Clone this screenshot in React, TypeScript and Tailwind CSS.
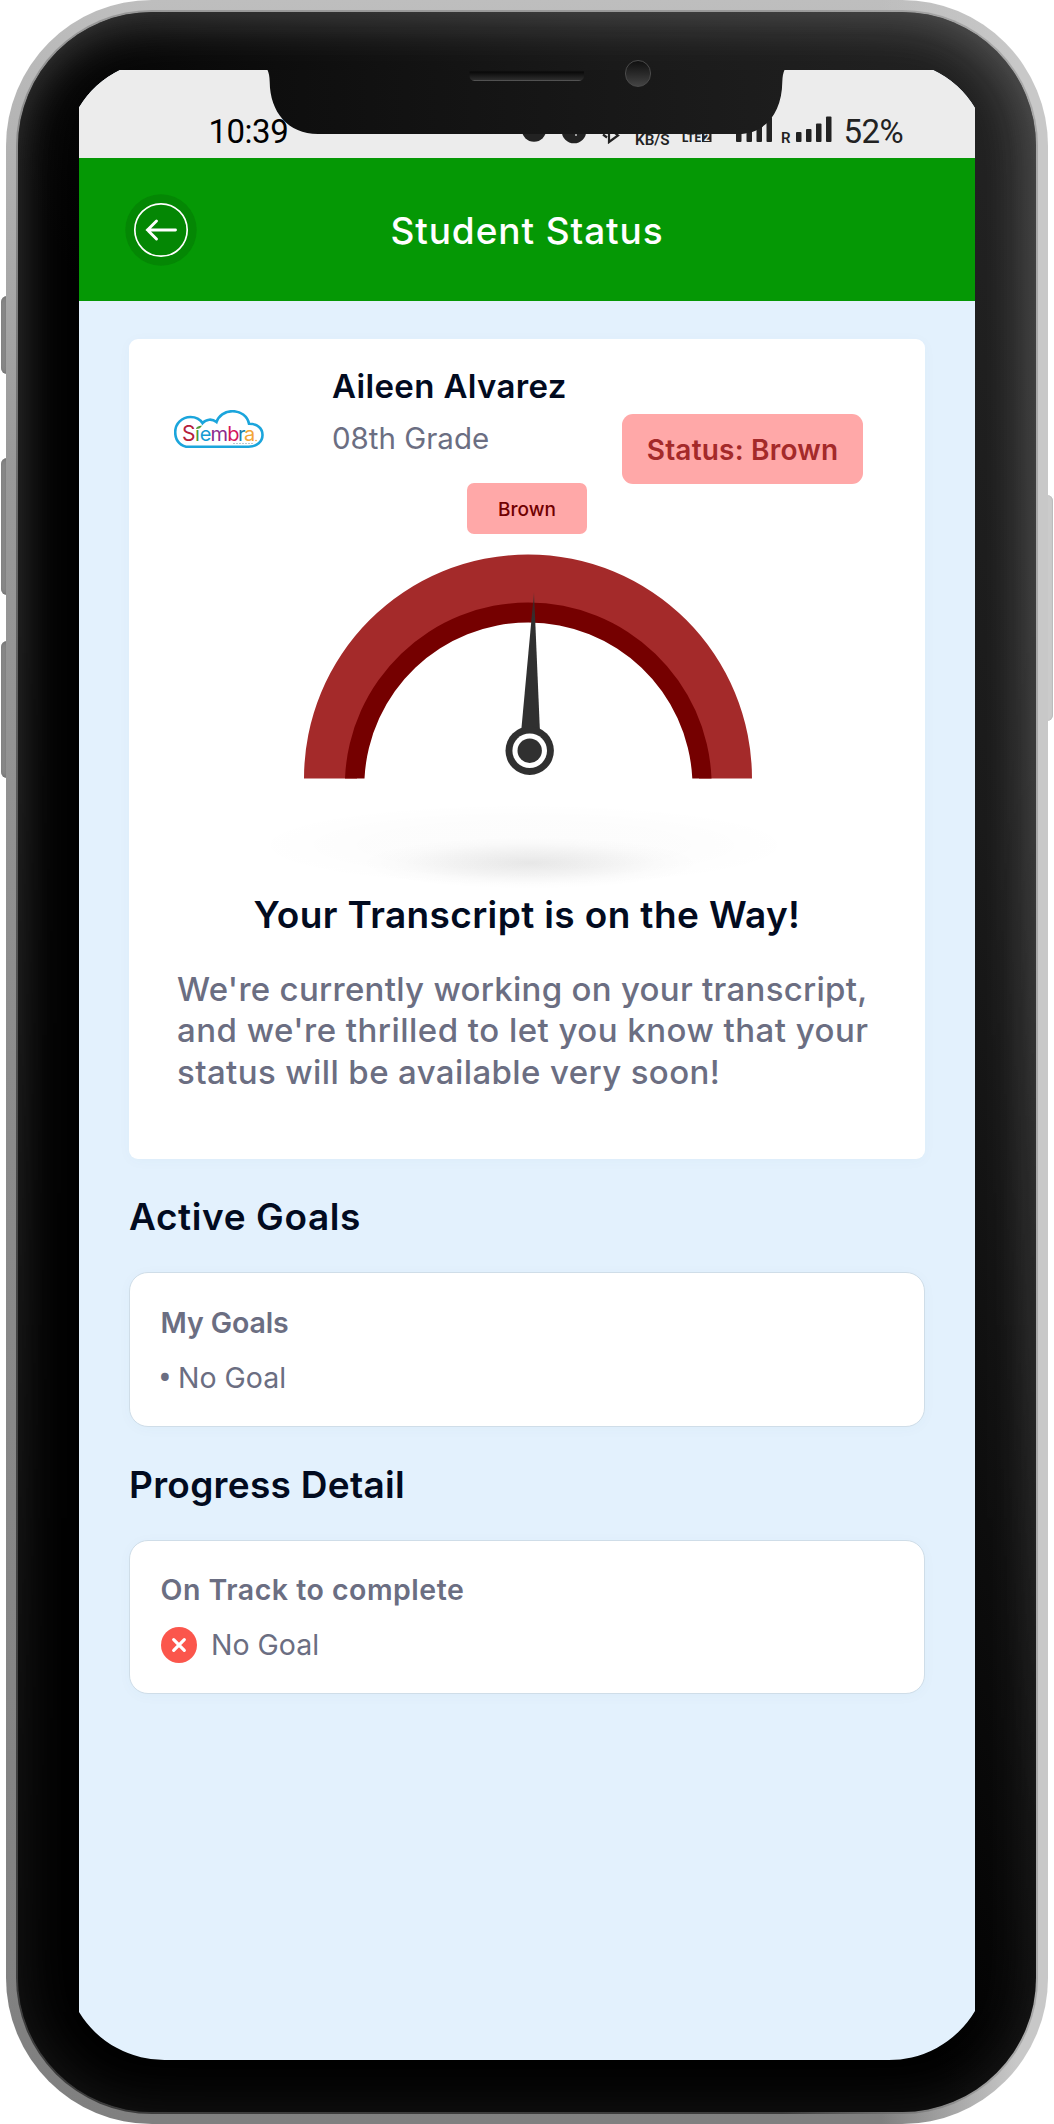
import type { ReactNode } from "react";

const screenClip =
  "path('M0 37.5 A98 98 0 0 1 41 0 H854 A98 98 0 0 1 896 38 V1941 A100 100 0 0 1 806 1990 H88 A100 100 0 0 1 0 1942 Z')";

function SideButton({ className }: { className: string }) {
  return (
    <div
      className={`absolute left-[1px] w-[9px] rounded-l-[6px] bg-linear-to-r from-[#979797] to-[#707070] shadow-[inset_0_0_4px_#666] ${className}`}
    />
  );
}

function StatusIcons() {
  return (
    <svg className="absolute left-[441px] top-[40px]" width="320" height="40" viewBox="520 110 320 40" fill="#222">
      <circle cx="534" cy="129.500" r="12.200" />
      <circle cx="574" cy="131" r="12.300" />
      <path d="M576 125v11" stroke="#ececec" strokeWidth="1.200" />
      <path d="M603 134.500l4 3M609 122v20l9-6.500-13-10" fill="none" stroke="#222" strokeWidth="2.200" />
      <text x="635" y="144.500" fontFamily="Roboto, sans-serif" fontSize="15.500" fontWeight="600" textLength="34.500" lengthAdjust="spacingAndGlyphs">KB/S</text>
      <text x="682" y="141.700" fontFamily="Roboto, sans-serif" fontSize="13" fontWeight="800" textLength="19" lengthAdjust="spacingAndGlyphs">LTE</text>
      <rect x="702" y="131" width="9.500" height="11" />
      <text x="703.800" y="140.800" fontFamily="Roboto, sans-serif" fontSize="10.500" fontWeight="700" fill="#ececec">2</text>
      <rect x="736" y="132" width="5.500" height="10" rx="1" />
      <rect x="746.500" y="129" width="5.500" height="13" rx="1" />
      <rect x="756.500" y="124" width="5.500" height="18" rx="1" />
      <rect x="766.500" y="117" width="5.500" height="25" rx="1" />
      <text x="781" y="142.700" fontFamily="Roboto, sans-serif" fontSize="15" fontWeight="600">R</text>
      <rect x="796" y="132" width="5.500" height="10" rx="1" />
      <rect x="806" y="129" width="5.500" height="13" rx="1" />
      <rect x="816" y="123.500" width="5.500" height="18.500" rx="1" />
      <rect x="826" y="116.500" width="5.500" height="25.500" rx="1" />
    </svg>
  );
}

function Notch() {
  return (
    <svg className="absolute left-[181px] top-0" width="532" height="66" viewBox="260 70 532 66" fill="none">
      <defs>
        <linearGradient id="notch" x1="0" x2="1">
          <stop offset="0" stopColor="#0e0e0e" />
          <stop offset="1" stopColor="#1d1d1d" />
        </linearGradient>
        <linearGradient id="speaker" x1="0" x2="0" y1="0" y2="1">
          <stop offset="0" stopColor="#070707" />
          <stop offset="0.850" stopColor="#2b2b2b" />
          <stop offset="1" stopColor="#666" />
        </linearGradient>
      </defs>
      <path
        d="M267.500 70Q269.500 74 269.700 82C270 112 288 134 318 134H738C766 134 782 112 782.300 82Q782.500 74 784.500 70Z"
        fill="url(#notch)"
      />
      <path d="M469.500 71.500H584V76A5 5 0 0 1 579 81H474.500A5 5 0 0 1 469.500 76Z" fill="url(#speaker)" />
    </svg>
  );
}

function Logo() {
  return (
    <svg className="block" width="90" height="39" viewBox="0 0 90 39" fill="none">
      <path
        d="M15 36.800H74.500C83 36.800 88.500 31.500 88.500 25C88.500 18 83 13.800 75 13.800C73.500 6 66.500 1.200 58.500 1.200C50.500 1.200 44.500 6 42.500 12C38 8.500 32 9 28.500 13.200C26 9 21.500 7 16.500 7C8 7 1.200 13.500 1.200 22C1.200 31 7 36.800 15 36.800Z"
        stroke="#1ba5dc"
        strokeWidth="2.600"
      />
      <text y="31" fontFamily="Inter, sans-serif" fontSize="20">
        <tspan x="8" fontSize="21" fill="#b5203a">S</tspan>
        <tspan x="21" fill="#4f9a35">ı</tspan>
        <tspan x="25.800" fill="#159bd3">e</tspan>
        <tspan x="36.500" fill="#8b2c8e">m</tspan>
        <tspan x="53.200" fill="#d4145a">b</tspan>
        <tspan x="64" fill="#1d7fae">r</tspan>
        <tspan x="70" fill="#f3a536">a</tspan>
      </text>
      <path d="M22 19Q22 16 28 15.500Q26.500 19 22 19Z" fill="#4f9a35" />
      <path d="M59 33.500H79" stroke="#b9c9d2" strokeWidth="1" strokeDasharray="2 1" />
      <circle cx="82" cy="30.500" r="0.800" fill="#f3a536" />
    </svg>
  );
}

function Gauge() {
  return (
    <svg className="block" width="796" height="358" viewBox="129 534 796 358" fill="none">
      <defs>
        <radialGradient id="shade">
          <stop offset="0" stopColor="#000" stopOpacity="0.085" />
          <stop offset="0.450" stopColor="#000" stopOpacity="0.042" />
          <stop offset="0.750" stopColor="#000" stopOpacity="0.012" />
          <stop offset="1" stopColor="#000" stopOpacity="0" />
        </radialGradient>
        <radialGradient id="haze">
          <stop offset="0" stopColor="#000" stopOpacity="0.012" />
          <stop offset="0.600" stopColor="#000" stopOpacity="0.010" />
          <stop offset="1" stopColor="#000" stopOpacity="0" />
        </radialGradient>
        <linearGradient id="needle" x1="0" x2="0" y1="0" y2="1">
          <stop offset="0" stopColor="#303030" stopOpacity="0.500" />
          <stop offset="0.200" stopColor="#303030" />
        </linearGradient>
      </defs>
      <ellipse cx="524" cy="845" rx="275" ry="42" fill="url(#haze)" />
      <ellipse cx="530" cy="863" rx="170" ry="26" fill="url(#shade)" />
      <path
        d="M304 778.500A224 224 0 0 1 752 778.500H699A171 171 0 0 0 357 778.500Z"
        fill="#a42a2a"
      />
      <path
        d="M345 778.500A183.400 183.400 0 0 1 711.500 778.500H692.300A164.100 164.100 0 0 0 364.500 778.500Z"
        fill="#750000"
      />
      <path d="M534 592L540 733H521Z" fill="url(#needle)" />
      <circle cx="529.700" cy="750.700" r="24.200" fill="#303030" />
      <circle cx="529.700" cy="750.700" r="17.300" fill="#fff" />
      <circle cx="529.700" cy="750.700" r="12.200" fill="#303030" />
    </svg>
  );
}

function GoalCard({ title, tracking, children }: { title: string; tracking: string; children: ReactNode }) {
  return (
    <div className="h-[154.500px] rounded-[19px] border-[1.500px] border-[#cfdde8] bg-white px-[30.500px] pt-[31.500px] text-[#6b6e82] shadow-[0_2px_14px_rgba(40,80,120,0.03)]">
      <h3 className={`text-[28.500px] leading-[36px] font-semibold ${tracking}`}>{title}</h3>
      <div className="mt-[19px] flex h-9 items-center text-[28.500px] leading-[36px]">{children}</div>
    </div>
  );
}

export default function App() {
  return (
    <div className="relative h-[2124px] w-[1054px] overflow-hidden bg-white font-['Inter',sans-serif]">
      <SideButton className="top-[296px] h-[78px]" />
      <SideButton className="top-[458px] h-[137px]" />
      <SideButton className="top-[641px] h-[137px]" />
      <div className="absolute top-[495px] left-[1044px] h-[226px] w-[9px] rounded-r-[6px] bg-[#cbcbcb] shadow-[inset_-1px_0_1px_#bbb]" />

      <div className="relative ml-[6px] h-[2124px] w-[1042px] rounded-[146px] bg-[linear-gradient(to_right,transparent_84%,#c8c8c8_97%),linear-gradient(to_bottom,#bebebe,#b4b4b4_6%,#999_22%,#8c8c8c_50%,#808080)] px-[10px] pt-[10px] pb-[10px]">
        <div className="h-[2104px] w-[1022px] rounded-[136px] bg-[linear-gradient(to_right,#0000_75%,#a8a8a8_97%),linear-gradient(to_bottom,#999,#666_25%,#444_60%,#3c3c3c)] p-[2px]">
          <div className="relative h-[2100px] w-[1018px] overflow-hidden rounded-[134px] bg-[linear-gradient(to_bottom_left,#242424,#1a1a1a_22%,#000_55%)]">
            <div className="absolute inset-0 rounded-[134px] shadow-[inset_0_0_60px_rgba(255,255,255,0.17)] [mask-image:linear-gradient(to_bottom,#000,#000_25%,#0009)]" />
            <div className="absolute inset-0 rounded-[134px] shadow-[inset_-8px_6px_50px_rgba(255,255,255,0.12)] [mask-image:linear-gradient(to_bottom,#000,#000_35%,transparent_90%)]" />

            <main
              className="relative mt-[58px] ml-[61px] h-[1990px] w-[896px] bg-[#e3f1fd]"
              style={{ clipPath: screenClip }}
            >
              <div className="relative flex h-[88px] justify-between bg-[#ececec] pr-[72px] pl-[129.500px] font-['Roboto',sans-serif] text-[33px] leading-[40px] text-black">
                <span className="mt-[42px] tracking-[-0.500px]">10:39</span>
                <StatusIcons />
                <span className="mt-[42px] text-[33px] tracking-[-0.600px] text-[#222]">52%</span>
                <Notch />
              </div>

              <header className="relative flex h-[143px] items-center justify-center bg-[#059805]">
                <button className="absolute top-[36px] left-[46px]" aria-label="Back">
                  <svg width="72" height="72" viewBox="0 0 72 72" fill="none" stroke="#fff">
                    <circle cx="36" cy="36" r="35.700" fill="#048704" stroke="none" />
                    <circle cx="36" cy="36" r="26.200" strokeWidth="1.700" />
                    <path d="M50.500 36H22.500M31.500 27L22.500 36L31.500 45" strokeWidth="2.900" strokeLinecap="round" />
                  </svg>
                </button>
                <h1 className="mt-[2px] text-[37px] font-medium tracking-[0.900px] text-white">Student Status</h1>
              </header>

              <div className="px-[50px] pt-[38px]">
                <section className="h-[820px] rounded-[9px] bg-white shadow-[0_2px_14px_rgba(40,80,120,0.03)]">
                  <div className="flex h-[144px] items-start">
                    <div className="mt-[71px] ml-[45px] w-[158px]">
                      <Logo />
                    </div>
                    <div className="w-[290px] pt-[27px]">
                      <h2 className="text-[33px] leading-[40px] font-semibold tracking-[0.350px] whitespace-nowrap text-[#020b1f]">
                        Aileen Alvarez
                      </h2>
                      <p className="mt-[14px] text-[29.500px] leading-[36px] text-[#6b6e82]">08th Grade</p>
                    </div>
                    <div className="mt-[75px] flex h-[70px] w-[241px] items-center justify-center rounded-[11px] bg-[#ffa8a8] pt-px text-[28px] font-semibold tracking-[0.200px] whitespace-nowrap text-[#a42a2a]">
                      Status: Brown
                    </div>
                  </div>
                  <div className="ml-[338px] flex h-[51px] w-[120px] items-center justify-center rounded-[7px] bg-[#ffa8a8] pt-[3px] text-[19px] font-medium text-[#700000]">
                    Brown
                  </div>
                  <Gauge />
                  <h2 className="mt-px text-center text-[37px] leading-[44px] font-semibold tracking-[0.380px] whitespace-nowrap text-[#020b1f]">
                    Your Transcript is on the Way!
                  </h2>
                  <p className="mt-[32px] pl-[48px] text-[33px] leading-[41.300px] font-medium whitespace-nowrap text-[#6b6e82]">
                    <span className="tracking-[0.280px]">We're currently working on your transcript,</span>
                    <br />
                    <span className="tracking-[0.470px]">and we're thrilled to let you know that your</span>
                    <br />
                    <span className="tracking-[0.390px]">status will be available very soon!</span>
                  </p>
                </section>

                <h2 className="mt-[36px] text-[37px] leading-[44px] font-semibold tracking-[0.600px] text-[#020b1f]">
                  Active Goals
                </h2>
                <div className="mt-[33px]">
                  <GoalCard title="My Goals" tracking="-tracking-[0.100px]">
                    <span className="flex w-[17.500px] items-center font-['Roboto',sans-serif] text-[38px]">
                      <span className="-ml-[2px]">•</span>
                    </span>
                    <span>No Goal</span>
                  </GoalCard>
                </div>

                <h2 className="mt-[36.500px] text-[37px] leading-[44px] font-semibold tracking-[0.300px] text-[#020b1f]">
                  Progress Detail
                </h2>
                <div className="mt-[32.500px]">
                  <GoalCard title="On Track to complete" tracking="tracking-[0.500px]">
                    <svg className="mr-[14.500px]" width="36" height="36" viewBox="0 0 36 36" fill="none">
                      <circle cx="18" cy="18" r="18" fill="#fb564c" />
                      <path d="M12.700 12.700L23.300 23.300M23.300 12.700L12.700 23.300" stroke="#fff" strokeWidth="3.200" strokeLinecap="round" />
                    </svg>
                    <span>No Goal</span>
                  </GoalCard>
                </div>
              </div>
            </main>

            <div className="absolute top-[48px] left-[607px] h-[27px] w-[26px] rounded-full border border-[#4a4a4a] bg-linear-to-b from-[#101010] to-[#444]" />
          </div>
        </div>
      </div>
    </div>
  );
}
